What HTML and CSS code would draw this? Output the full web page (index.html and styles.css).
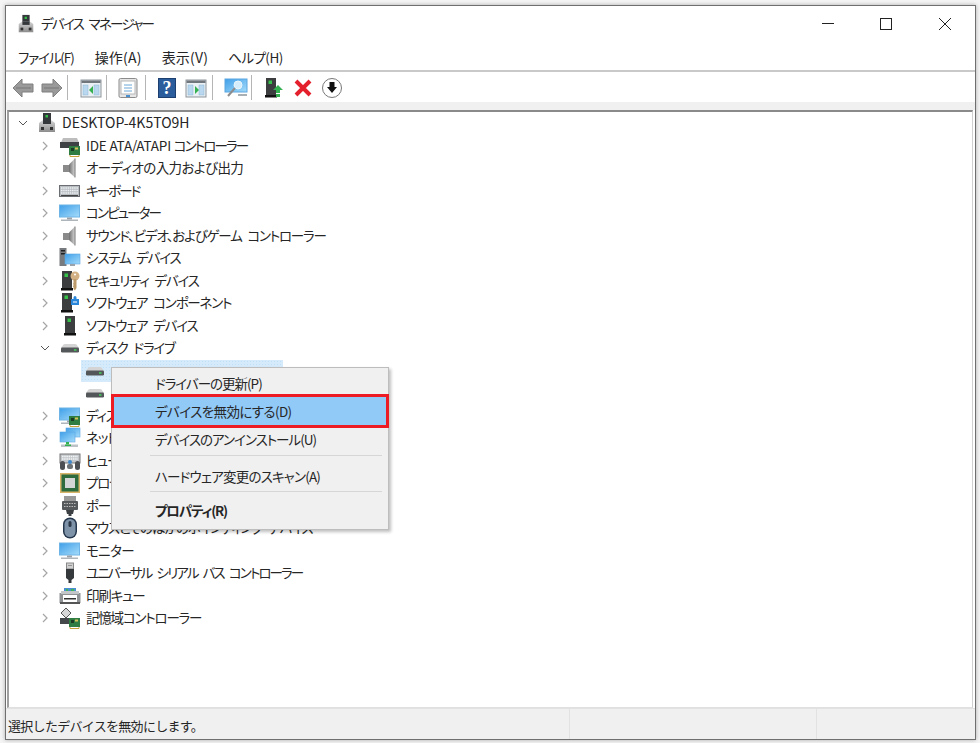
FILE: index.html
```html
<!DOCTYPE html>
<html lang="ja">
<head>
<meta charset="utf-8">
<title>デバイス マネージャー</title>
<link rel="stylesheet" href="styles.css">
</head>
<body>
<svg class="sprite" aria-hidden="true">
  <defs>
    <linearGradient id="scr" x1="0" y1="0" x2="1" y2="1"><stop offset="0" stop-color="#3f9fe8"/><stop offset="1" stop-color="#a5dcfb"/></linearGradient>
    <linearGradient id="metal" x1="0" y1="0" x2="0" y2="1"><stop offset="0" stop-color="#d6d6d6"/><stop offset="1" stop-color="#8c8c8c"/></linearGradient>
    <linearGradient id="cone" x1="0" y1="0" x2="1" y2="0"><stop offset="0" stop-color="#6f6f6f"/><stop offset="1" stop-color="#d9d9d9"/></linearGradient>
    <symbol id="tower" viewBox="0 0 22 22"><rect x="6" y="1" width="10" height="17" fill="#3b3d3f"/><rect x="8.500" y="3.500" width="3.500" height="3.500" fill="#36c24a"/><rect x="5" y="18" width="12" height="2.500" fill="#111"/></symbol>
    <symbol id="pc" viewBox="0 0 22 22"><rect x="7" y="1" width="8" height="10" fill="#34383a"/><rect x="9.500" y="3" width="2.500" height="2.500" fill="#35c04a"/><path d="M7 8 3 11v9h16v-9l-4-3z" fill="url(#metal)"/><rect x="7" y="8" width="8" height="4" fill="#34383a"/><rect x="5" y="15" width="3" height="3" fill="#333"/><rect x="14" y="15" width="3" height="3" fill="#333"/></symbol>
    <symbol id="card" viewBox="0 0 22 22"><rect x="10" y="11" width="11" height="9" fill="#2f7d43"/><rect x="12" y="13" width="3" height="3" fill="#1b3a24"/><rect x="16" y="12.500" width="3" height="2" fill="#d8c25a"/><path d="M11 20v1.500h9V20" stroke="#c9a13c" fill="none"/></symbol>
    <symbol id="disk" viewBox="0 0 22 22"><path d="M2 11 4.500 7.500Q5 7 6 7h10q1 0 1.500.5L20 11z" fill="#d4d4d4"/><rect x="2" y="10.500" width="18" height="5" rx="1.200" fill="#53575a"/><rect x="15" y="12.200" width="2.500" height="1.500" fill="#46d35c"/></symbol>
    <symbol id="ide" viewBox="0 0 22 22"><path d="M2 7.500 4 3h14l2 4.500z" fill="#bdbdbd"/><rect x="1" y="7" width="19" height="6" fill="#3e4245"/><use href="#card"/></symbol>
    <symbol id="speaker" viewBox="0 0 22 22"><rect x="4" y="8" width="6" height="7" fill="#8a8a8a"/><path d="M10 7.500 16 1.500v19l-6-5.500z" fill="url(#cone)"/><path d="M16 1.500v19" stroke="#777"/></symbol>
    <symbol id="keyboard" viewBox="0 0 22 22"><rect x="0.500" y="5.500" width="20" height="11" fill="#b9bec3" stroke="#6b6f73"/><path d="M2 8h17M2 10.500h17M2 13h17" stroke="#eef1f3" stroke-width="1.400" stroke-dasharray="1.500 .7"/><rect x="2" y="15" width="17" height="1" fill="#444"/></symbol>
    <symbol id="monitor" viewBox="0 0 22 22"><rect x="0.500" y="3" width="20" height="12" fill="url(#scr)" stroke="#6fb4e6"/><rect x="8" y="15.500" width="5" height="2" fill="#9aa3aa"/><rect x="2" y="17.500" width="17" height="1.500" fill="#aeb6bc"/></symbol>
    <symbol id="system" viewBox="0 0 22 22"><rect x="0.500" y="1" width="7" height="18" fill="#777b7f"/><rect x="2" y="3" width="4" height="1.500" fill="#222"/><rect x="2" y="6" width="4" height="1.500" fill="#222"/><rect x="6" y="7" width="15" height="10" fill="url(#scr)" stroke="#5aa6df" stroke-width=".6"/><rect x="11" y="17" width="5" height="2" fill="#9aa3aa"/></symbol>
    <symbol id="security" viewBox="0 0 22 22"><use href="#tower" x="-3"/><circle cx="16" cy="6" r="4.500" fill="#d3b083"/><circle cx="16" cy="4.500" r="1" fill="#fff"/><path d="M14.500 9h3v9l-1.500 2.500-1.500-1.500v-2l-.7-.7.700-.7v-1l-.7-.7.700-.7z" fill="#bd9a6b"/></symbol>
    <symbol id="software" viewBox="0 0 22 22"><use href="#tower" x="-3"/><path d="M12 7h2.500V5.500a1.500 1.500 0 1 1 3 0V7H20v6h-8z" fill="#2a86d8"/><path d="M14 10h4" stroke="#fff"/></symbol>
    <symbol id="display" viewBox="0 0 22 22"><use href="#monitor"/><use href="#card"/></symbol>
    <symbol id="network" viewBox="0 0 22 22"><rect x="7" y="1" width="14" height="9" fill="url(#scr)" stroke="#5aa6df" stroke-width=".6"/><rect x="1" y="5" width="15" height="10" fill="url(#scr)" stroke="#5aa6df" stroke-width=".6"/><rect x="7" y="15" width="3" height="2.500" fill="#35b050"/><rect x="2" y="17.500" width="17" height="2.500" fill="#bcc2c6"/><rect x="6" y="17.500" width="6" height="1.500" fill="#35b050"/></symbol>
    <symbol id="hid" viewBox="0 0 22 22"><rect x="1" y="4" width="20" height="9" fill="#c3c7cb" stroke="#777"/><path d="M3 6.500h16M3 9h16" stroke="#f2f4f5" stroke-width="1.300" stroke-dasharray="1.500 .7"/><rect x="1" y="11" width="5" height="9" rx="2.500" fill="#4c5054"/><rect x="16" y="11" width="5" height="9" rx="2.500" fill="#4c5054"/><circle cx="11" cy="12" r="2" fill="#3f87c9"/><rect x="8" y="14" width="6" height="5" rx="2" fill="#6d7277"/></symbol>
    <symbol id="cpu" viewBox="0 0 22 22"><rect x="1" y="1" width="20" height="20" fill="#d9b56a"/><rect x="2.500" y="2.500" width="17" height="17" fill="#2e6b3d"/><rect x="6" y="6" width="10" height="10" fill="#d3d6d4"/></symbol>
    <symbol id="port" viewBox="0 0 22 22"><rect x="5" y="1" width="12" height="5" fill="#9a9a9a"/><rect x="3" y="6" width="16" height="9" rx="1" fill="#55595c"/><path d="M5 8.500h12M5 11.500h12" stroke="#bbb" stroke-dasharray="1.500 1"/><path d="M7 15h8l-1 4h-1.500v2h-3v-2H8z" fill="#3d4043"/></symbol>
    <symbol id="mouse" viewBox="0 0 22 22"><rect x="4" y="0.500" width="14" height="21" rx="7" fill="#23364c"/><rect x="5.500" y="2" width="11" height="18" rx="5.500" fill="#7f93a8"/><rect x="9.500" y="4" width="3" height="6" rx="1.500" fill="#2a3848"/></symbol>
    <symbol id="usb" viewBox="0 0 22 22"><rect x="7.500" y="1" width="7" height="6" fill="#d0d0d0" stroke="#888"/><rect x="9.500" y="3" width="1" height="1" fill="#555"/><rect x="11.500" y="3" width="1" height="1" fill="#555"/><path d="M7 7h8v9l-2.500 2v3h-3v-3L7 16z" fill="#36393b"/></symbol>
    <symbol id="printer" viewBox="0 0 22 22"><path d="M5 3h12v6H5z" fill="#4a90d0"/><path d="M7 4h2v2H7zM12 4h3v3h-3z" fill="#3fb458"/><rect x="0.500" y="8" width="21" height="10" fill="#8f9396"/><rect x="2" y="6" width="18" height="3" fill="#c4c7c9"/><rect x="4" y="10" width="14" height="7" fill="#fff"/><rect x="5" y="13" width="12" height="1.500" fill="#333"/><rect x="1" y="17" width="20" height="2" fill="#555"/></symbol>
    <symbol id="storage" viewBox="0 0 22 22"><path d="M7 1 12 6 7 11 2 6z" fill="#d7d7d7" stroke="#555"/><rect x="1" y="11" width="9" height="6" fill="#45484b"/><use href="#card"/></symbol>
    <symbol id="window-pane" viewBox="0 0 22 22"><rect x="1" y="3" width="20" height="17" fill="#eaf0f4" stroke="#8d959b"/><rect x="1.500" y="3.500" width="19" height="2.500" fill="#70777c"/><rect x="3" y="8" width="5" height="10" fill="#b9d7ee" stroke="#8fb7d6" stroke-width=".5"/><rect x="14" y="8" width="5" height="10" fill="#b9d7ee" stroke="#8fb7d6" stroke-width=".5"/></symbol>
    <symbol id="chev-r" viewBox="0 0 10 10"><path d="M3 1l4 4-4 4" fill="none" stroke="#a6a6a6" stroke-width="1.200"/></symbol>
    <symbol id="chev-d" viewBox="0 0 10 10"><path d="M1 3l4 4 4-4" fill="none" stroke="#555"/></symbol>
  </defs>
</svg>

<div class="window">
  <header class="titlebar">
    <svg class="title-icon"><use href="#pc"/></svg>
    <span class="title-text">デバイス マネージャー</span>
    <div class="caption">
      <span class="cap-btn"><svg width="12" height="12"><path d="M0 5.500h12" stroke="#222"/></svg></span>
      <span class="cap-btn"><svg width="12" height="12"><rect x="0.500" y="0.500" width="11" height="11" fill="none" stroke="#222"/></svg></span>
      <span class="cap-btn"><svg width="12" height="12"><path d="M0 0l12 12M12 0 0 12" stroke="#222"/></svg></span>
    </div>
  </header>

  <nav class="menubar">
    <span class="menu-item menu-kana">ファイル(F)</span>
    <span class="menu-item">操作(A)</span>
    <span class="menu-item">表示(V)</span>
    <span class="menu-item menu-kana menu-help">ヘルプ(H)</span>
  </nav>

  <div class="toolbar">
    <span class="tool"><svg width="22" height="20"><path d="M10 1 1 10l9 9v-5h11V6H10z" fill="#9a9a9a" stroke="#7f7f7f"/><path d="M4 10h15" stroke="#777"/></svg></span>
    <span class="tool"><svg width="22" height="20"><path d="M12 1l9 9-9 9v-5H1V6h11z" fill="#9a9a9a" stroke="#7f7f7f"/><path d="M3 10h15" stroke="#777"/></svg></span>
    <span class="sep sep-a"></span>
    <span class="tool"><svg width="22" height="22"><use href="#window-pane"/><path d="M13 9v8l-4-4z" fill="#35b050"/></svg></span>
    <span class="sep sep-b"></span>
    <span class="tool"><svg width="22" height="22"><rect x="2" y="1.500" width="18" height="19" rx="1.500" fill="#e6e6e6" stroke="#8b8b8b"/><rect x="4" y="4" width="14" height="13" fill="#fff" stroke="#b5b5b5"/><path d="M7 8h8M7 11h8M7 14h8" stroke="#6aa6d6"/><rect x="9" y="18" width="4" height="2" fill="#4a90d0"/></svg></span>
    <span class="sep sep-c"></span>
    <span class="tool"><svg width="20" height="22"><rect x="1.500" y="1.500" width="17" height="19" fill="#2b5c9c" stroke="#1c3f70"/><text class="help-q" x="10" y="17">?</text></svg></span>
    <span class="tool"><svg width="22" height="22"><use href="#window-pane"/><path d="M10 9v8l4-4z" fill="#35b050"/></svg></span>
    <span class="sep sep-d"></span>
    <span class="tool"><svg width="24" height="22"><rect x="1" y="2" width="22" height="13" fill="url(#scr)" stroke="#5aa6df"/><circle cx="14" cy="8" r="4" fill="#d5ecfb" stroke="#eaf5fc"/><path d="M11 11 4 19" stroke="#8d8d8d" stroke-width="2"/><path d="M14 18h9" stroke="#a8b0b6" stroke-width="2"/></svg></span>
    <span class="sep sep-e"></span>
    <span class="tool tool-narrow"><svg width="22" height="22"><use href="#tower" x="-4"/><path d="M14 8l5 5h-3v3h-4v-3H9z" fill="#35b050"/><rect x="12" y="17" width="4" height="3" fill="#35b050"/></svg></span>
    <span class="tool"><svg width="20" height="20"><path d="M3 3l14 14M17 3 3 17" stroke="#e3202b" stroke-width="4"/></svg></span>
    <span class="tool"><svg width="22" height="22"><circle cx="11" cy="11" r="9.500" fill="#fff" stroke="#777"/><path d="M8.500 5h5v5H16l-5 6-5-6h2.500z" fill="#111"/></svg></span>
  </div>

  <div class="gutter"></div>

  <main class="tree">
    <div class="row lv0"><svg class="chev"><use href="#chev-d"/></svg><svg class="ico"><use href="#pc"/></svg><span class="label label-root">DESKTOP-4K5TO9H</span></div>
    <div class="row lv1"><svg class="chev"><use href="#chev-r"/></svg><svg class="ico"><use href="#ide"/></svg><span class="label tight"><span class="latin">IDE ATA/ATAPI </span>コントローラー</span></div>
    <div class="row lv1"><svg class="chev"><use href="#chev-r"/></svg><svg class="ico"><use href="#speaker"/></svg><span class="label loose">オーディオの入力および出力</span></div>
    <div class="row lv1"><svg class="chev"><use href="#chev-r"/></svg><svg class="ico"><use href="#keyboard"/></svg><span class="label tight">キーボード</span></div>
    <div class="row lv1"><svg class="chev"><use href="#chev-r"/></svg><svg class="ico"><use href="#monitor"/></svg><span class="label tight">コンピューター</span></div>
    <div class="row lv1"><svg class="chev"><use href="#chev-r"/></svg><svg class="ico"><use href="#speaker"/></svg><span class="label">サウンド、ビデオ、およびゲーム コントローラー</span></div>
    <div class="row lv1"><svg class="chev"><use href="#chev-r"/></svg><svg class="ico"><use href="#system"/></svg><span class="label">システム デバイス</span></div>
    <div class="row lv1"><svg class="chev"><use href="#chev-r"/></svg><svg class="ico"><use href="#security"/></svg><span class="label">セキュリティ デバイス</span></div>
    <div class="row lv1"><svg class="chev"><use href="#chev-r"/></svg><svg class="ico"><use href="#software"/></svg><span class="label">ソフトウェア コンポーネント</span></div>
    <div class="row lv1"><svg class="chev"><use href="#chev-r"/></svg><svg class="ico"><use href="#tower"/></svg><span class="label">ソフトウェア デバイス</span></div>
    <div class="row lv1"><svg class="chev"><use href="#chev-d"/></svg><svg class="ico"><use href="#disk"/></svg><span class="label">ディスク ドライブ</span></div>
    <div class="row lv2"><span class="selection"><svg class="ico"><use href="#disk"/></svg></span></div>
    <div class="row lv2"><svg class="ico"><use href="#disk"/></svg></div>
    <div class="row lv1"><svg class="chev"><use href="#chev-r"/></svg><svg class="ico"><use href="#display"/></svg><span class="label">ディスプレイ アダプター</span></div>
    <div class="row lv1"><svg class="chev"><use href="#chev-r"/></svg><svg class="ico"><use href="#network"/></svg><span class="label">ネットワーク アダプター</span></div>
    <div class="row lv1"><svg class="chev"><use href="#chev-r"/></svg><svg class="ico"><use href="#hid"/></svg><span class="label">ヒューマン インターフェイス デバイス</span></div>
    <div class="row lv1"><svg class="chev"><use href="#chev-r"/></svg><svg class="ico"><use href="#cpu"/></svg><span class="label">プロセッサ</span></div>
    <div class="row lv1"><svg class="chev"><use href="#chev-r"/></svg><svg class="ico"><use href="#port"/></svg><span class="label">ポート (COM と LPT)</span></div>
    <div class="row lv1"><svg class="chev"><use href="#chev-r"/></svg><svg class="ico"><use href="#mouse"/></svg><span class="label">マウスとそのほかのポインティング デバイス</span></div>
    <div class="row lv1"><svg class="chev"><use href="#chev-r"/></svg><svg class="ico"><use href="#monitor"/></svg><span class="label loose">モニター</span></div>
    <div class="row lv1"><svg class="chev"><use href="#chev-r"/></svg><svg class="ico"><use href="#usb"/></svg><span class="label tight">ユニバーサル シリアル バス コントローラー</span></div>
    <div class="row lv1"><svg class="chev"><use href="#chev-r"/></svg><svg class="ico"><use href="#printer"/></svg><span class="label">印刷キュー</span></div>
    <div class="row lv1"><svg class="chev"><use href="#chev-r"/></svg><svg class="ico"><use href="#storage"/></svg><span class="label">記憶域コントローラー</span></div>
  </main>

  <footer class="statusbar">
    <span class="status-main">選択したデバイスを無効にします。</span>
    <span class="status-cell status-mid"></span>
    <span class="status-cell status-end"></span>
  </footer>
</div>

<div class="context-menu">
  <div class="ctx-item ctx-a">ドライバーの更新(P)</div>
  <div class="ctx-item ctx-hl">デバイスを無効にする(D)</div>
  <div class="ctx-item ctx-c">デバイスのアンインストール(U)</div>
  <div class="ctx-sep"></div>
  <div class="ctx-item ctx-d">ハードウェア変更のスキャン(A)</div>
  <div class="ctx-sep"></div>
  <div class="ctx-item ctx-e">プロパティ(R)</div>
</div>
</body>
</html>
```
FILE: styles.css
```css
* { box-sizing: border-box; }
html, body { margin: 0; padding: 0; height: 100%; }
body {
  position: relative;
  width: 980px;
  height: 743px;
  overflow: hidden;
  background: #f4f4f4;
  padding: 5px 4px 3px 5px;
  font-family: "Noto Sans CJK JP", "Liberation Sans", sans-serif;
  font-feature-settings: "palt";
  font-size: 14px;
  color: #262626;
}
.sprite { position: absolute; width: 0; height: 0; }

.window {
  width: 971px;
  height: 735px;
  background: #fff;
  border: 1px solid #6f6f6f;
  box-shadow: 0 0 4px rgba(0, 0, 0, .3);
  display: flex;
  flex-direction: column;
}

.titlebar { height: 36px; flex: none; display: flex; align-items: center; padding-left: 10px; }
.title-icon { width: 20px; height: 20px; margin-right: 5px; }
.title-text { flex: 1; font-size: 13.5px; letter-spacing: -1.700px; word-spacing: 4px; padding-bottom: 2px; white-space: nowrap; }
.caption { display: flex; padding-right: 1px; }
.cap-btn { width: 58.5px; height: 36px; display: flex; align-items: center; justify-content: center; }
.cap-btn svg { display: block; }

.menubar { height: 30px; flex: none; display: flex; align-items: center; gap: 20px; padding: 2px 0 0 12px; border-bottom: 2px solid #c9c9c9; font-size: 14px; }
.menu-item { letter-spacing: .2px; }
.menu-kana { font-size: 13.5px; letter-spacing: -1.100px; margin-right: 1px; }
.menu-help { letter-spacing: -.5px; }

.toolbar { height: 30px; flex: none; display: flex; align-items: center; padding: 1px 0 0 2px; }
.tool { width: 29px; height: 28px; display: flex; align-items: center; justify-content: center; flex: none; }
.tool-narrow { width: 27px; }
.tool svg { display: block; }
.help-q { font-family: "Liberation Serif", serif; font-weight: 700; font-size: 18px; fill: #fff; text-anchor: middle; }
.sep { width: 1px; height: 25px; background: #b5b5b5; flex: none; }
.sep-a { margin: 0 8px 0 1px; }
.sep-b { margin: 0 6px 0 1px; }
.sep-c { margin: 0 6px 0 3px; }
.sep-d { margin: 0 8px 0 2px; }
.sep-e { margin: 0 9px 0 1px; }

.gutter { height: 8px; flex: none; background: #f0f0f0; }

.tree {
  flex: 1;
  margin: 0 2px 0 1px;
  border-top: 2px solid #8a8a8a;
  border-left: 2px solid #a0a0a0;
  border-right: 1px solid #d0d0d0;
  border-bottom: 1px solid #e0e0e0;
  background: #fff;
  font-size: 13.5px;
}
.row { height: 22.5px; display: flex; align-items: center; white-space: nowrap; }
.lv0 { padding-left: 9px; }
.lv1 { padding-left: 31px; }
.lv2 { padding-left: 75px; }
.chev { width: 10px; height: 10px; flex: none; margin-right: 9px; }
.lv0 .chev { margin-right: 8px; }
.ico { width: 22px; height: 22px; flex: none; }
.label { margin-left: 5px; padding-bottom: 2px; letter-spacing: -1.200px; word-spacing: 4px; }
.tight { letter-spacing: -1.900px; }
.loose { letter-spacing: -.6px; }
.label-root { margin-left: 4px; font-size: 14px; letter-spacing: 0; }
.latin { font-size: 13.5px; letter-spacing: -.2px; word-spacing: 0; }
.selection {
  display: flex;
  align-items: center;
  width: 202px;
  height: 22px;
  margin-left: -3px;
  padding-left: 3px;
  background-color: #d5ebfb;
  background-image: radial-gradient(#bfe0f7 1px, transparent 1px);
  background-size: 3px 3px;
}

.statusbar { height: 31px; flex: none; display: flex; background: #f0f0f0; border-top: 1px solid #e2e2e2; }
.status-main { width: 563px; padding-left: 2px; line-height: 33px; font-size: 13px; letter-spacing: -.7px; font-feature-settings: normal; white-space: nowrap; }
.status-cell { border-left: 1px solid #e2e2e2; }
.status-mid { width: 247px; }
.status-end { flex: 1; }

.context-menu {
  position: absolute;
  left: 111px;
  top: 367px;
  width: 278px;
  height: 163px;
  padding: 3px 2px;
  background: #f0f0f0;
  border: 1px solid #bdbdbd;
  box-shadow: 2px 2px 3px rgba(0, 0, 0, .25);
  font-size: 13.5px;
  letter-spacing: -1px;
}
.ctx-item { padding-left: 41px; white-space: nowrap; display: flex; align-items: center; }
.ctx-a { height: 22px; margin-top: 1px; padding-bottom: 1px; }
.ctx-hl {
  height: 34px;
  margin: 0 -3px;
  background: #91c9f7;
  border: 3px solid #ed1c24;
  padding-bottom: 1px;
  letter-spacing: -.6px;
}
.ctx-c { height: 27px; padding-bottom: 5px; }
.ctx-d { height: 35px; padding-top: 5px; letter-spacing: -.8px; }
.ctx-e { height: 35px; font-weight: 700; letter-spacing: -1.200px; }
.ctx-sep { height: 1px; margin: 0 4px 0 36px; background: #d6d6d6; }
```
